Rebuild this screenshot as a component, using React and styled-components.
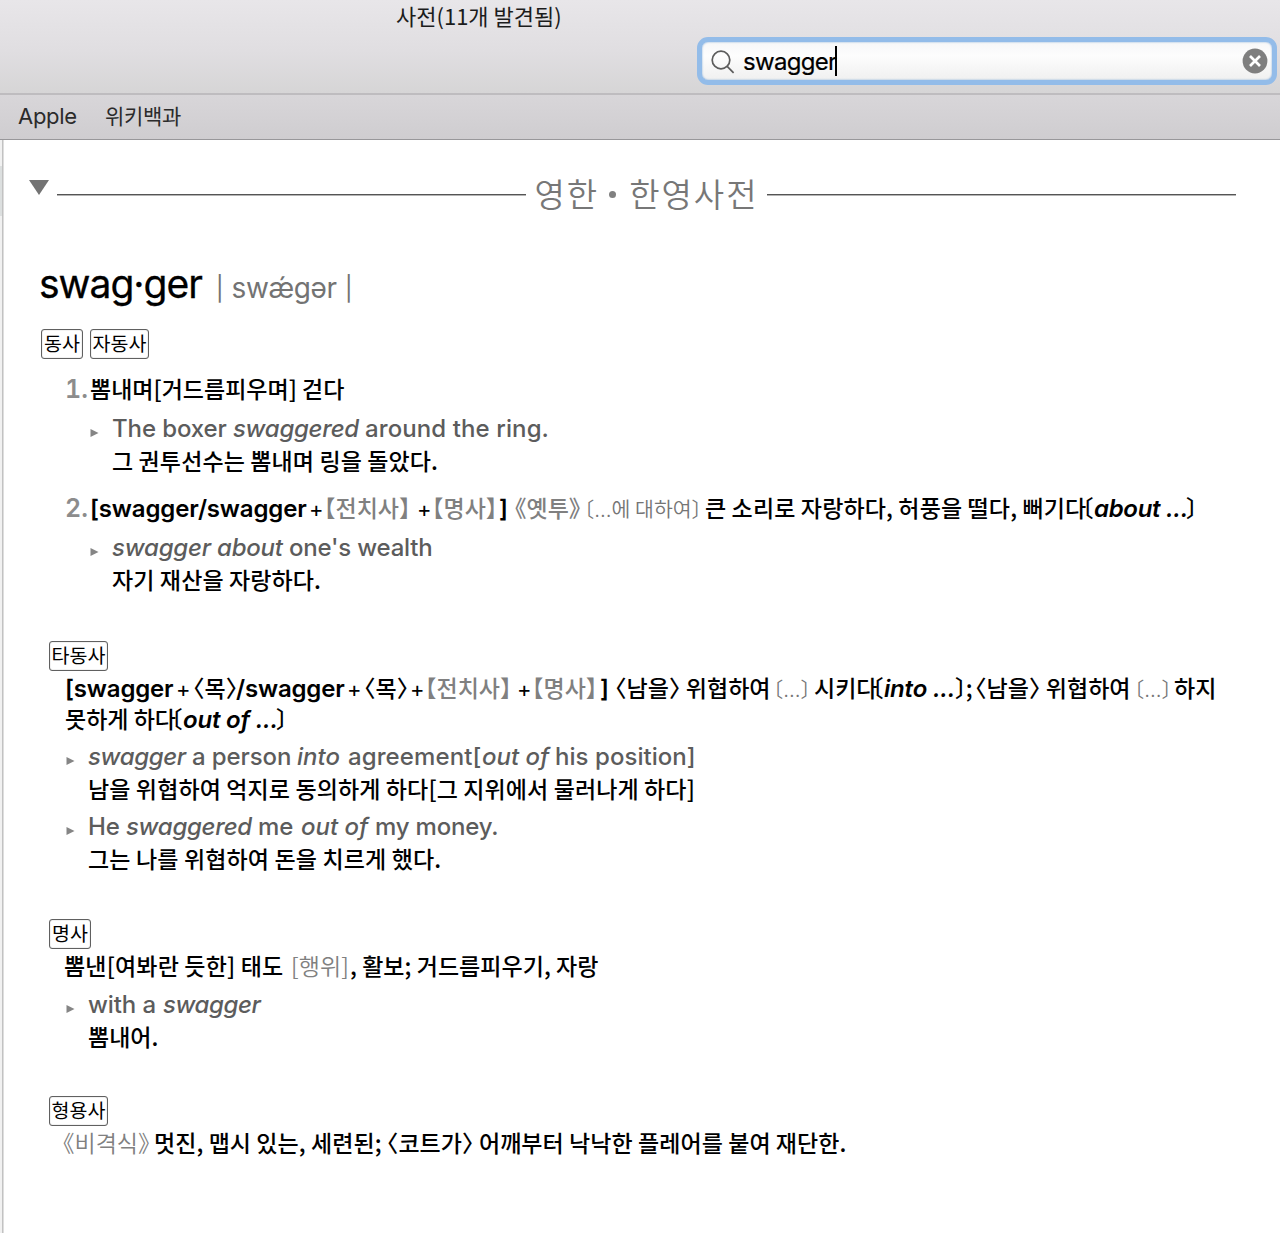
import React from 'react';
import styled, { createGlobalStyle } from 'styled-components';

const theme = {
    text: '#000',
    example: '#5c5c5c',
    label: '#808080',
    rule: '#555',
    focus: '#93bce9',
};


const App = () => {

    return (
        <Window>
            <GlobalStyle />
            <TitleBar>
                <Title>사전(11개 발견됨)</Title>
                <SearchField>
                    <SearchIcon viewBox="0 0 24 24">
                        <circle cx="10" cy="10" r="8.8" />
                        <path d="M16.2 16.4 L22.6 22.8" />
                    </SearchIcon>
                    <Query>swagger</Query>
                    <Caret />
                    <ClearIcon viewBox="0 0 26 26">
                        <circle cx="13" cy="13" r="12.4" />
                        <path d="M8 8 L18 18 M18 8 L8 18" />
                    </ClearIcon>
                </SearchField>
            </TitleBar>
            <TabBar>
                <Tab $w={87} $ls={-0.3}>Apple</Tab>
                <Tab $ls={-0.3} $ko>위키백과</Tab>
            </TabBar>
            <Body>
                <Sidebar><Thumb /></Sidebar>
                <Article>
                    <Heading>
                        <Disclosure viewBox="0 0 20 15"><path d="M0 0 H20 L10 15 Z" /></Disclosure>
                        <Rule />
                        <DictName>
                            <span>영한</span>
                            <Dot />
                            <span>한영사전</span>
                        </DictName>
                        <Rule />
                    </Heading>

                    <Headword>
                        <Word>swag·ger</Word>
                        <Pron><Bar>|</Bar> swǽɡər <Bar>|</Bar></Pron>
                    </Headword>

                    <Tags $x={38} $top={20}>
                        <Tag $w={42}>동사</Tag>
                        <Tag $w={59}>자동사</Tag>
                    </Tags>

                    <Line $x={62} $top={15}>
                        <Num>1.</Num>
                        <Ko>뽐내며[거드름피우며] 걷다</Ko>
                    </Line>
                    <Example x={86}>
                        <En $w={121} $ls={-0.11}>{'The boxer '}</En>
                        <En $w={132} $ls={-0.3} $i>{'swaggered '}</En>
                        <En $ls={0.1}>around the ring.</En>
                    </Example>
                    <Line $x={109}><Ko $ls={0.12}>그 권투선수는 뽐내며 링을 돌았다.</Ko></Line>

                    <Line $x={62} $top={15}>
                        <Num>2.</Num>
                        <En $w={219} $ls={-0.14} $b>[swagger/swagger</En>
                        <Plus $w={15}>+</Plus>
                        <Ko $w={93} $gray>【전치사】</Ko>
                        <Plus $w={15}>+</Plus>
                        <Ko $w={67} $gray>【명사】</Ko>
                        <En $w={16} $b>]</En>
                        <Ko $w={69} $gray>《옛투》</Ko>
                        <Note $w={121}>〔<Dots>...</Dots>에 대하여〕</Note>
                        <Ko $w={381} $ls={0.14}>큰 소리로 자랑하다, 허풍을 떨다, 뻐기다</Ko>
                        <Bracket>〔</Bracket>
                        <En $w={92} $ls={-0.31} $b $i>about ...</En>
                        <Ko>〕</Ko>
                    </Line>
                    <Example x={86}>
                        <En $w={177} $ls={-0.21} $i>{'swagger about '}</En>
                        <En $ls={-0.2}>one's wealth</En>
                    </Example>
                    <Line $x={109}><Ko $ls={0.12}>자기 재산을 자랑하다.</Ko></Line>

                    <Tags $x={46} $top={44}><Tag $w={59}>타동사</Tag></Tags>
                    <Line $x={62} $top={2}>
                        <En $w={111} $ls={-0.16} $b>[swagger</En>
                        <Plus $w={17}>+</Plus>
                        <Ko $w={43}>〈목〉</Ko>
                        <En $w={111} $ls={-0.16} $b>/swagger</En>
                        <Plus $w={17}>+</Plus>
                        <Ko $w={46}>〈목〉</Ko>
                        <Plus $w={15}>+</Plus>
                        <Ko $w={92} $gray>【전치사】</Ko>
                        <Plus $w={15}>+</Plus>
                        <Ko $w={68} $gray>【명사】</Ko>
                        <En $w={15} $b>]</En>
                        <Ko $w={158} $ls={0.05}>{'〈남을〉 위협하여 '}</Ko>
                        <Note $w={41}>〔<Dots>...</Dots>〕</Note>
                        <Ko $w={62}>시키다</Ko>
                        <Bracket>〔</Bracket>
                        <En $w={71} $ls={-0.2} $b $i>into ...</En>
                        <Ko $w={20} $ls={-0.8}>〕;</Ko>
                        <Ko $w={159} $ls={0.05}>{'〈남을〉 위협하여 '}</Ko>
                        <Note $w={40}>〔<Dots>...</Dots>〕</Note>
                        <Ko>하지</Ko>
                    </Line>
                    <Line $x={62} $top={-1}>
                        <Ko $w={110}>못하게 하다</Ko>
                        <Bracket>〔</Bracket>
                        <En $w={93} $ls={-0.2} $b $i>out of ...</En>
                        <Ko>〕</Ko>
                    </Line>
                    <Example x={62} top={6}>
                        <En $w={104} $ls={-0.35} $i>swagger</En>
                        <En $w={105} $ls={-0.1}>a person</En>
                        <En $w={51} $i>into</En>
                        <En $w={134} $ls={0.1}>agreement[</En>
                        <En $w={73} $i>out of</En>
                        <En $ls={0.05}>his position]</En>
                    </Example>
                    <Line $x={85}><Ko $ls={0.12}>남을 위협하여 억지로 동의하게 하다[그 지위에서 물러나게 하다]</Ko></Line>
                    <Example x={62} top={6}>
                        <En $w={38}>He</En>
                        <En $w={132} $ls={-0.3} $i>swaggered</En>
                        <En $w={43}>me</En>
                        <En $w={74} $i>out of</En>
                        <En $ls={-0.2}>my money.</En>
                    </Example>
                    <Line $x={85}><Ko $ls={0.15}>그는 나를 위협하여 돈을 치르게 했다.</Ko></Line>

                    <Tags $x={46} $top={43}><Tag $w={42}>명사</Tag></Tags>
                    <Line $x={61} $top={2}>
                        <Ko $w={227} $ls={0.17}>뽐낸[여봐란 듯한] 태도</Ko>
                        <Ko $w={59} $ls={0.1} $gray $thin>[행위]</Ko>
                        <Ko $ls={0.05}>, 활보; 거드름피우기, 자랑</Ko>
                    </Line>
                    <Example x={62} top={7}>
                        <En $w={75} $ls={-0.1}>with a</En>
                        <En $ls={-0.4} $i>swagger</En>
                    </Example>
                    <Line $x={85}><Ko>뽐내어.</Ko></Line>

                    <Tags $x={46} $top={42}><Tag $w={59}>형용사</Tag></Tags>
                    <Line $x={60} $top={2}>
                        <Ko $w={91} $gray $thin>《비격식》</Ko>
                        <Ko $ls={0.07}>멋진, 맵시 있는, 세련된; 〈코트가〉 어깨부터 낙낙한 플레어를 붙여 재단한.</Ko>
                    </Line>
                </Article>
            </Body>
        </Window>
    )
}

const Example = ({ x, top = 8, children }) => (
    <Line $x={x} $top={top} $soft>
        <Bullet viewBox="0 0 9 9"><path d="M0 0 L9 4.5 L0 9 Z" /></Bullet>
        {children}
    </Line>
)

export default App;

const GlobalStyle = createGlobalStyle`
* {
    box-sizing: border-box;
}

body {
    margin: 0;
    background: #fff;
    color: ${theme.text};
    font-family: Inter, 'Noto Sans CJK KR', sans-serif;
}
`;

const Window = styled.div`
width: 1280px;
height: 1233px;
display: flex;
flex-direction: column;
overflow: hidden;
`;

const TitleBar = styled.header`
height: 95px;
display: flex;
flex-direction: column;
background: linear-gradient(#e8e6e9, #e0dee1 55%, #d6d5d6);
border-bottom: 2px solid #bebcbf;
`;

const Title = styled.div`
height: 37px;
padding-left: 396px;
font: 400 22px/30px 'Noto Sans CJK KR', sans-serif;
color: #1c1c1c;
`;

const SearchField = styled.div`
width: 580px;
height: 48px;
flex: none;
margin-left: 697px;
padding: 0 4px 0 9px;
display: flex;
align-items: center;
border: 5px solid ${theme.focus};
border-radius: 11px;
background: linear-gradient(#f7f7f8, #fdfdfd 35%, #f0f0f0);
box-shadow: inset 0 0 2px #7ba6d6;
`;

const SearchIcon = styled.svg`
width: 24px;
height: 24px;
margin: 2px 8px 0 0;
fill: none;
stroke: #5c5c5c;
stroke-width: 1.7;
`;

const Query = styled.span`
width: 92px;
padding-top: 1px;
font-size: 24px;
line-height: 36px;
letter-spacing: -0.7px;
-webkit-text-stroke: 0.2px;
`;

const Caret = styled.span`
width: 2px;
height: 30px;
background: #000;
`;

const ClearIcon = styled.svg`
width: 26px;
height: 26px;
margin-left: auto;
fill: #7f7f7f;

& path {
    stroke: #fff;
    stroke-width: 2.7;
}
`;

const TabBar = styled.nav`
height: 45px;
flex: none;
padding: 0 0 3px 18px;
display: flex;
align-items: center;
background: linear-gradient(#d8d6d9, #cfcdd0);
border-bottom: 1px solid #98979a;
`;

const Tab = styled.span`
width: ${p => p.$w ? `${p.$w}px` : 'auto'};
padding-bottom: ${p => p.$ko ? 2 : 0}px;
font-family: ${p => p.$ko ? "'Noto Sans CJK KR', sans-serif" : 'Inter, sans-serif'};
font-size: ${p => p.$ko ? 21 : 22}px;
line-height: 32px;
letter-spacing: ${p => p.$ls}px;
color: #2b2b2b;
`;

const Body = styled.main`
flex: 1;
display: flex;
`;

const Sidebar = styled.div`
width: 3px;
flex: none;
padding-top: 26px;
background: #f1f1f1;
border-right: 1px solid #c2c2c2;
box-shadow: 1px 0 #dedede;
`;

const Thumb = styled.div`
height: 50px;
background: #dcdfdf;
`;

const Article = styled.article`
flex: 1;
padding-top: 32px;
`;

const Heading = styled.div`
height: 45px;
padding: 0 44px 0 26px;
display: flex;
align-items: center;
`;

const Disclosure = styled.svg`
width: 20px;
height: 15px;
margin: 0 8px 14px 0;
fill: #737373;
`;

const Rule = styled.div`
flex: 1;
height: 2px;
border-top: 1px solid ${theme.rule};
border-bottom: 1px solid #b4b4b4;
`;

const DictName = styled.div`
width: 241px;
padding-bottom: 4px;
display: flex;
align-items: center;
justify-content: center;
font: 350 33px/44px 'Noto Sans CJK KR', sans-serif;
letter-spacing: 2px;
color: #777;
`;

const Dot = styled.i`
width: 7px;
height: 7px;
margin: 4px 13px 0 10px;
border-radius: 50%;
background: #808080;
`;

const Headword = styled.div`
height: 50px;
margin-top: 42px;
padding-left: 36px;
display: flex;
align-items: baseline;
white-space: pre;
`;

const Word = styled.span`
width: 176px;
font-size: 39px;
line-height: 50px;
letter-spacing: -0.99px;
-webkit-text-stroke: 0.3px;
`;

const Pron = styled.span`
font-size: 28px;
line-height: 36px;
letter-spacing: -0.38px;
color: #737373;
`;

const Bar = styled.span`
font-size: 24px;
vertical-align: 1px;
padding: 0 0.7px;
`;

const Tags = styled.div`
height: 30px;
margin-top: ${p => p.$top}px;
padding-left: ${p => p.$x}px;
display: flex;
gap: 7px;
`;

const Tag = styled.span`
width: ${p => p.$w}px;
height: 30px;
border: 1px solid #606060;
border-radius: 3px;
box-shadow: inset 0 0 1px #777;
font: 400 19.5px/26px 'Noto Sans CJK KR', sans-serif;
text-align: center;
white-space: nowrap;
`;

const Line = styled.div`
height: 32px;
margin-top: ${p => p.$top || 0}px;
padding-left: ${p => p.$x}px;
display: flex;
align-items: baseline;
white-space: pre;
color: ${p => p.$soft ? theme.example : theme.text};
`;

const Piece = styled.span`
width: ${p => p.$w ? `${p.$w}px` : 'auto'};
flex: none;
line-height: 28px;
letter-spacing: ${p => p.$ls || 0}px;
`;

const En = styled(Piece)`
font-size: 24px;
font-weight: ${p => p.$b ? 600 : 500};
font-style: ${p => p.$i ? 'italic' : 'normal'};
line-height: 30px;
`;

const Ko = styled(Piece)`
font-family: 'Noto Sans CJK KR', sans-serif;
font-size: 23px;
font-weight: ${p => p.$thin ? 350 : 500};
font-feature-settings: 'halt';
color: ${p => p.$gray ? theme.label : 'inherit'};
`;

const Bracket = styled(Ko)`
width: 12px;
margin-left: -4px;
`;

const Note = styled(Piece)`
font-family: 'Noto Sans CJK KR', sans-serif;
font-size: 20.5px;
font-weight: 350;
font-feature-settings: 'halt';
color: #757575;
`;

const Dots = styled.span`
font-family: Inter, sans-serif;
`;

const Plus = styled(Piece)`
font-size: 22px;
font-weight: 400;
letter-spacing: -1px;
`;

const Num = styled(Piece)`
width: 25px;
font-size: 25px;
font-weight: 600;
font-feature-settings: 'tnum';
color: #8c8c8c;
`;

const Bullet = styled.svg`
width: 9px;
height: 8px;
flex: none;
margin: 0 13px 4px 1px;
fill: #858585;
`;
